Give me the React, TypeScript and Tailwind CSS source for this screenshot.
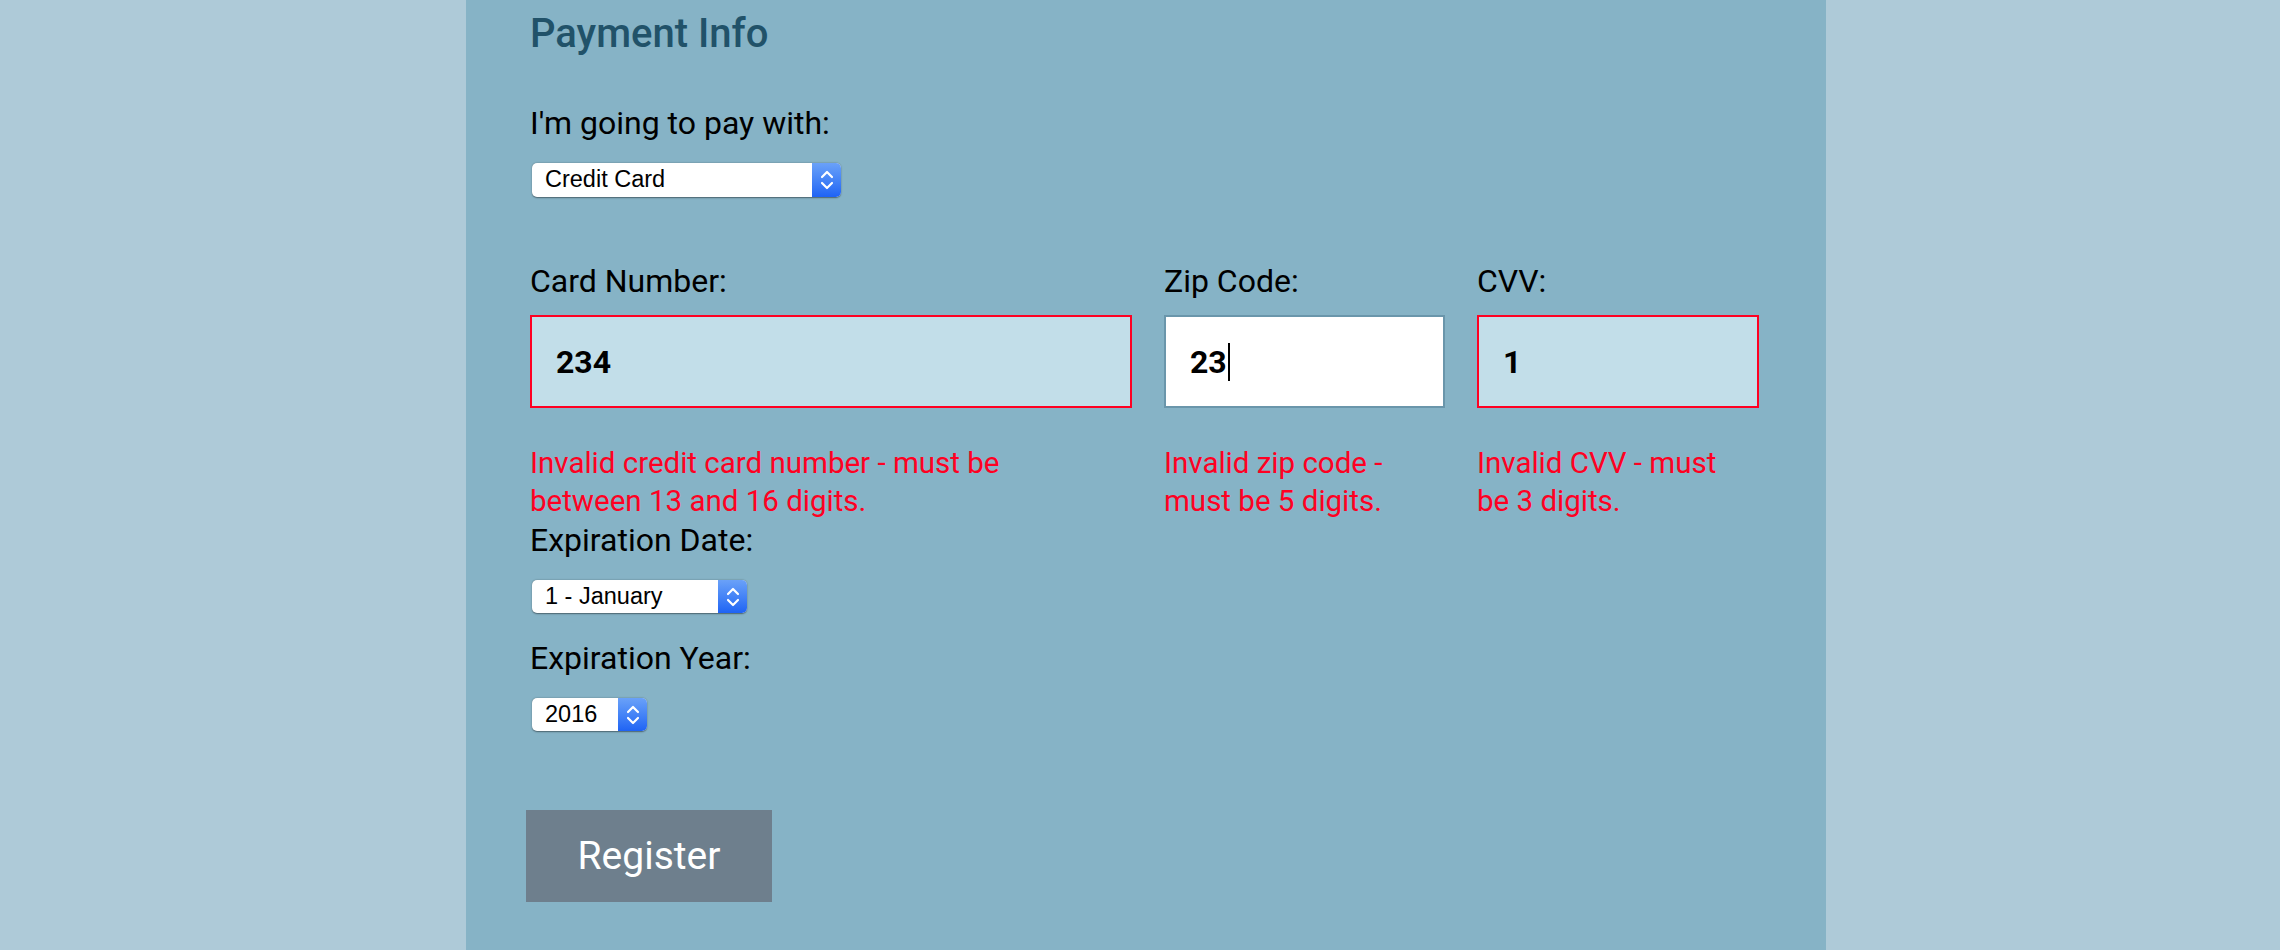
import React from 'react';

const roboto = "font-['Roboto',sans-serif]";
const system = "font-['Liberation_Sans','Helvetica',sans-serif]";

function Chevrons() {
  return (
    <svg width="14" height="24" viewBox="0 0 14 24" fill="none" stroke="white" strokeWidth="2.2" strokeLinecap="round" strokeLinejoin="round">
      <path d="M2 9 L7 4 L12 9" />
      <path d="M2 15 L7 20 L12 15" />
    </svg>
  );
}

function MacSelect({ value, width, height = 'h-[32px]' }: { value: string; width: string; height?: string }) {
  return (
    <div className={`${width} ${height} flex rounded-[5px] bg-white shadow-[0_0.5px_1.5px_rgba(0,0,0,0.45)] overflow-hidden`}>
      <div className={`flex-1 flex items-center pl-[13px] text-[23.5px] text-black ${system}`}>{value}</div>
      <div className="w-[29px] flex items-center justify-center bg-gradient-to-b from-[#6aa1f8] to-[#1f63f4]">
        <Chevrons />
      </div>
    </div>
  );
}

interface FieldProps {
  label: string;
  value: string;
  error: string;
  invalid: boolean;
  caret?: boolean;
  errorWidth?: string;
}

function Field({ label, value, error, invalid, caret, errorWidth = '' }: FieldProps) {
  return (
    <div className="flex flex-col">
      <label className="text-[32px] leading-[40px] text-black">{label}</label>
      <div className="relative mt-[14px]">
        <input
          readOnly
          value={value}
          className={`w-full h-[93px] border-2 pl-[24px] text-[32px] font-bold text-black outline-none ${roboto} ${
            invalid ? 'border-[#ff0022] bg-[#c2dee9]' : 'border-[#6a96ab] bg-white'
          }`}
        />
        {caret && <span className="absolute left-[64px] top-[28px] w-[2px] h-[38px] bg-black" />}
      </div>
      <p className={`mt-[36px] text-[29.5px] leading-[38px] text-[#ff0022] ${errorWidth}`}>{error}</p>
    </div>
  );
}

export default function App() {
  return (
    <div className={`min-h-screen bg-[#aecad8] ${roboto}`}>
      <div className="ml-[466px] w-[1360px] min-h-screen bg-[#86b3c6] pl-[64px] pr-[66px] pt-[14px]">
        <h2 className="text-[40px] leading-[40px] font-medium text-[#215269]">Payment Info</h2>

        <p className="mt-[49px] text-[32px] leading-[40px] text-black">I'm going to pay with:</p>
        <div className="mt-[20px] ml-[2px]">
          <MacSelect value="Credit Card" width="w-[309px]" height="h-[34px]" />
        </div>

        <div className="mt-[64px] grid grid-cols-[602px_281px_282px] gap-x-[32px]">
          <Field
            label="Card Number:"
            value="234"
            invalid
            errorWidth="max-w-[560px]"
            error="Invalid credit card number - must be between 13 and 16 digits."
          />
          <Field label="Zip Code:" value="23" invalid={false} caret error="Invalid zip code - must be 5 digits." />
          <Field label="CVV:" value="1" invalid errorWidth="max-w-[268px]" error="Invalid CVV - must be 3 digits." />
        </div>

        <p className="text-[32px] leading-[40px] text-black">Expiration Date:</p>
        <div className="mt-[20px] ml-[2px]">
          <MacSelect value="1 - January" width="w-[215px]" height="h-[33px]" />
        </div>

        <p className="mt-[25px] text-[32px] leading-[40px] text-black">Expiration Year:</p>
        <div className="mt-[20px] ml-[2px]">
          <MacSelect value="2016" width="w-[115px]" height="h-[33px]" />
        </div>

        <button className="mt-[79px] -ml-[4px] w-[246px] h-[92px] bg-[#6e7f8d] text-white text-[39px]">Register</button>
      </div>
    </div>
  );
}
